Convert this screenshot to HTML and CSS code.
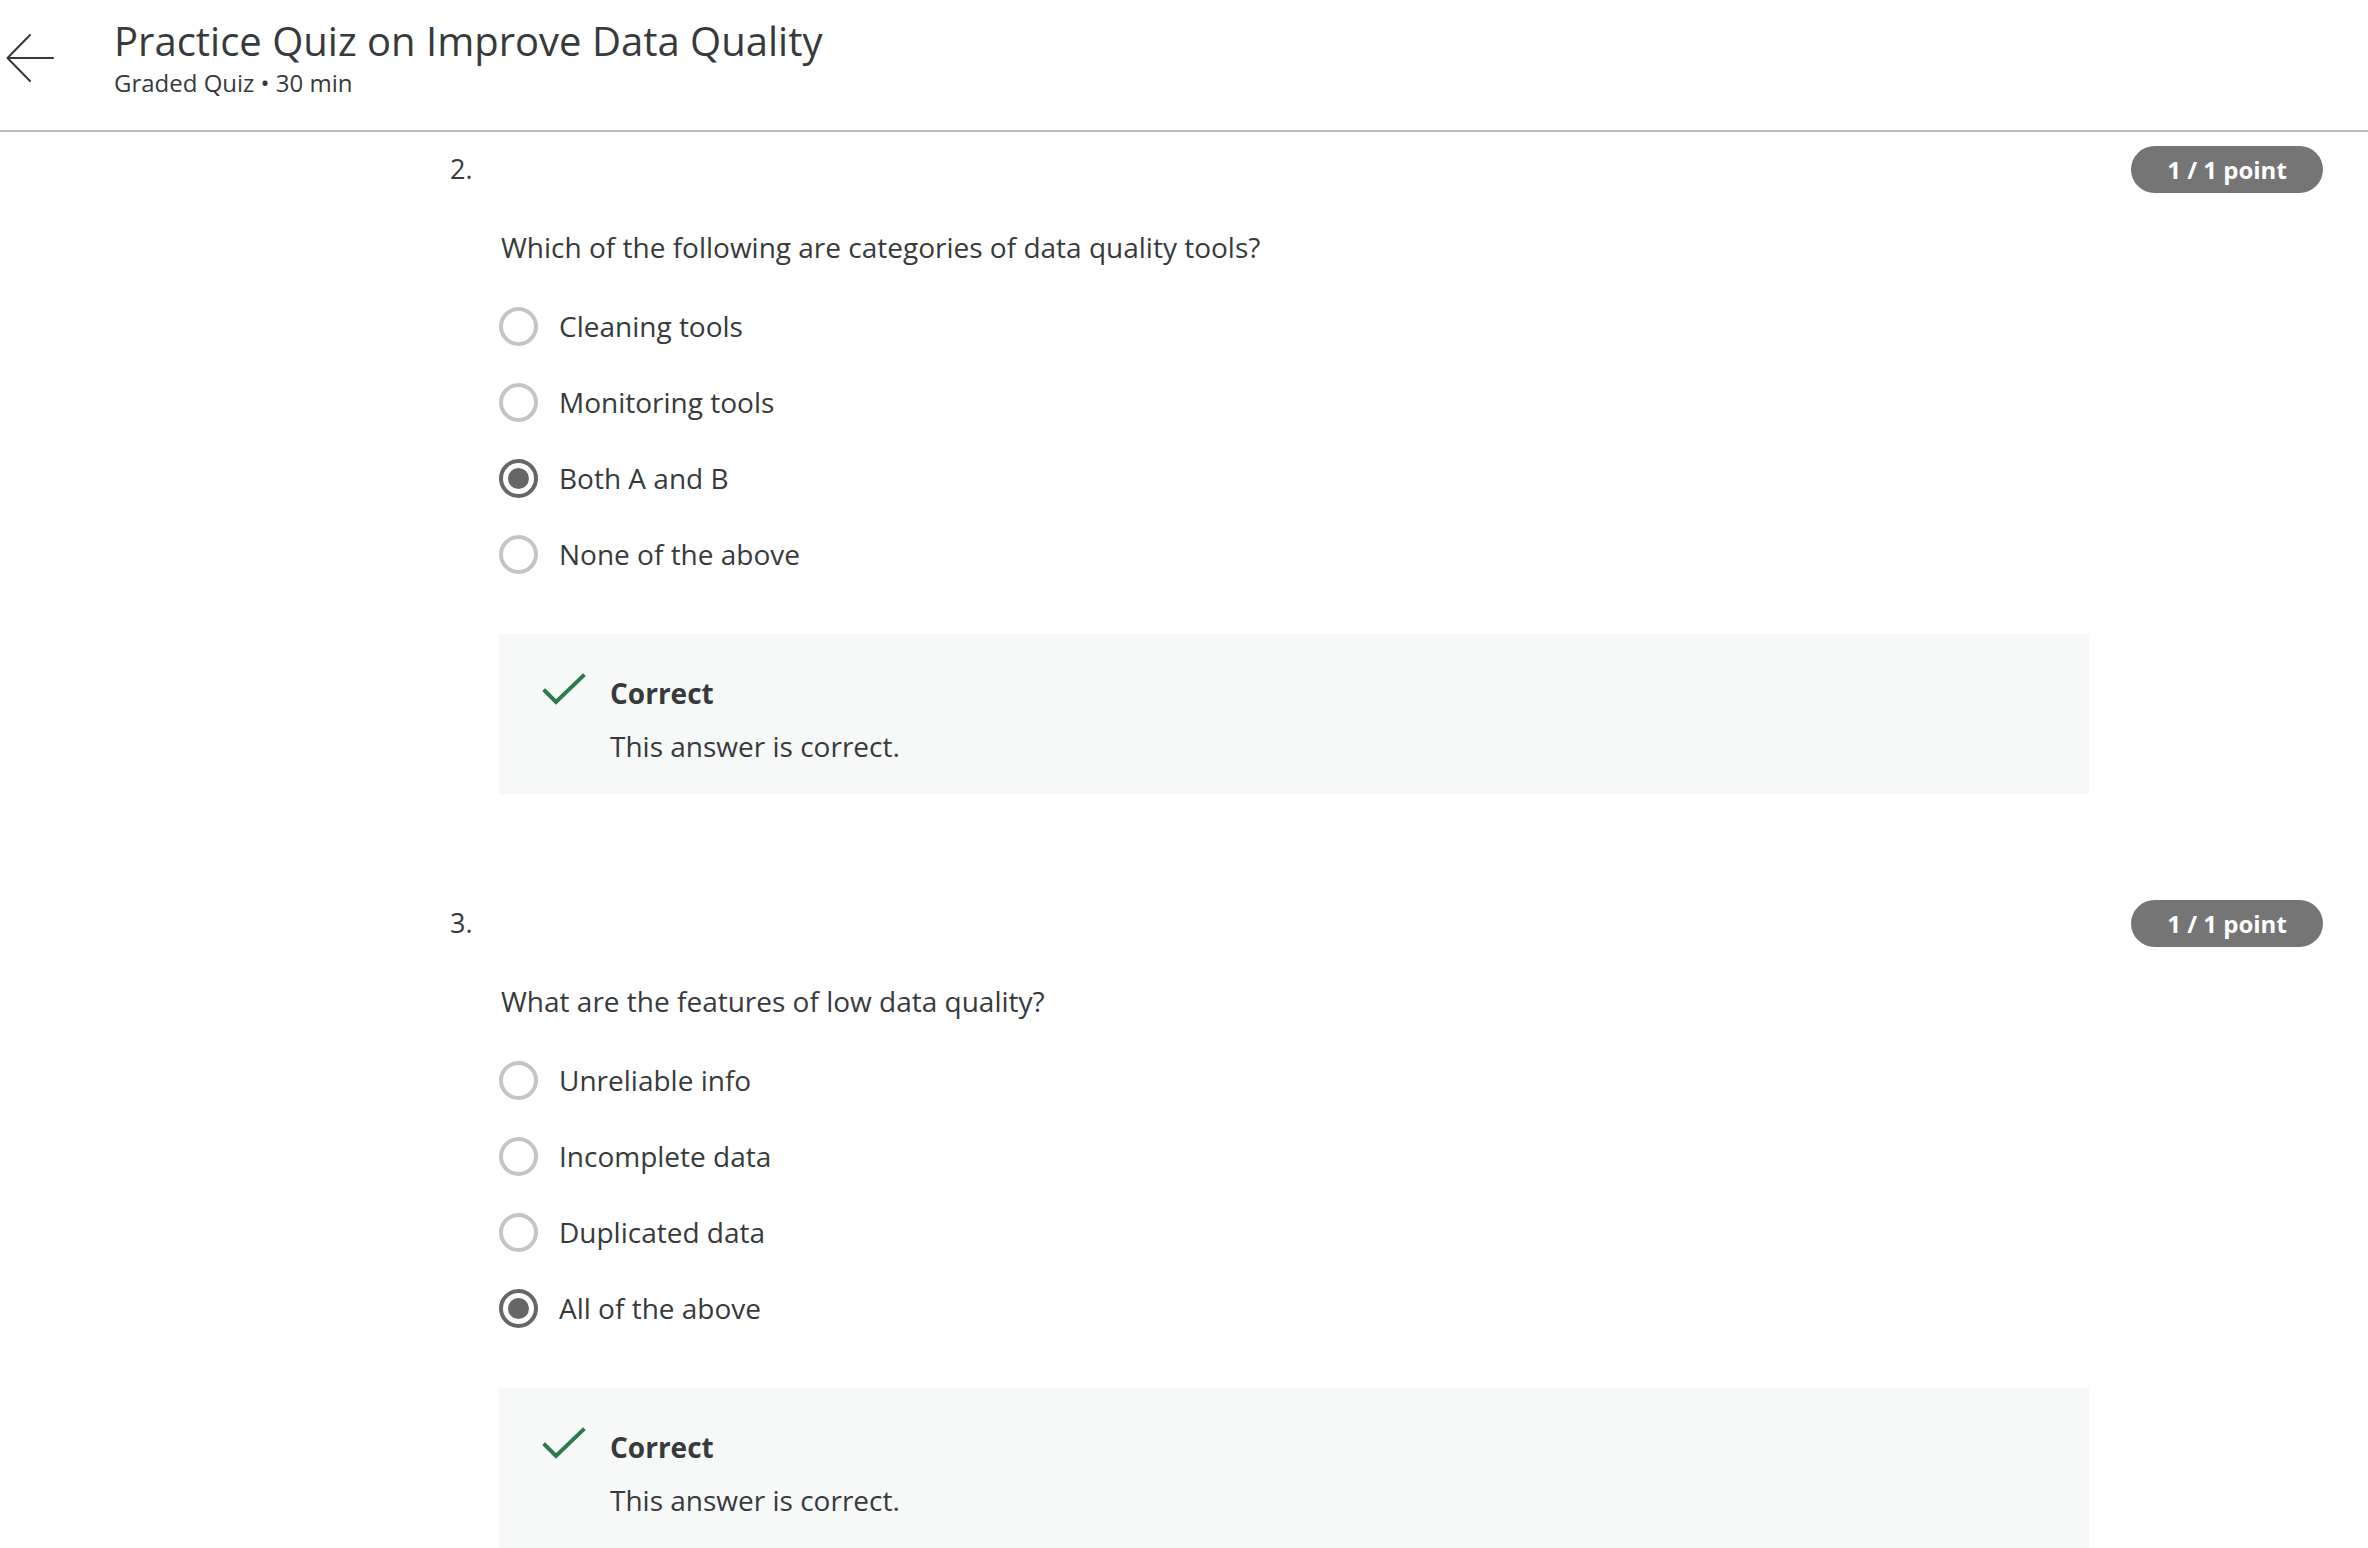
FILE: index.html
```html
<!DOCTYPE html>
<html lang="en">
<head>
<meta charset="utf-8">
<title>Practice Quiz on Improve Data Quality</title>
<link rel="stylesheet" href="styles.css">
</head>
<body>
<header class="topbar">
  <button class="back" aria-label="Back">
    <svg width="48" height="48" viewBox="0 0 48 48" fill="none" stroke="#373a3c" stroke-width="2" stroke-linecap="round" stroke-linejoin="round">
      <path d="M47 24H2"/>
      <path d="M24 1L1.5 24L24 47"/>
    </svg>
  </button>
  <div class="titles">
    <h1 class="title">Practice Quiz on Improve Data Quality</h1>
    <div class="subtitle">Graded Quiz • 30 min</div>
  </div>
</header>

<main class="content">
  <section class="question">
    <div class="q-head">
      <span class="q-num">2.</span>
      <span class="badge">1 / 1 point</span>
    </div>
    <div class="q-body">
      <p class="q-text">Which of the following are categories of data quality tools?</p>
      <ul class="options">
        <li class="option"><span class="radio"></span><span>Cleaning tools</span></li>
        <li class="option"><span class="radio"></span><span>Monitoring tools</span></li>
        <li class="option"><span class="radio checked"></span><span>Both A and B</span></li>
        <li class="option"><span class="radio"></span><span>None of the above</span></li>
      </ul>
      <div class="feedback">
        <svg class="check" width="44" height="34" viewBox="0 0 44 34" fill="none" stroke="#2e7a4f" stroke-width="4" stroke-linecap="square">
          <path d="M3 18L14 29L41 3"/>
        </svg>
        <div class="fb-text">
          <div class="fb-title">Correct</div>
          <div class="fb-desc">This answer is correct.</div>
        </div>
      </div>
    </div>
  </section>

  <section class="question">
    <div class="q-head">
      <span class="q-num">3.</span>
      <span class="badge">1 / 1 point</span>
    </div>
    <div class="q-body">
      <p class="q-text">What are the features of low data quality?</p>
      <ul class="options">
        <li class="option"><span class="radio"></span><span>Unreliable info</span></li>
        <li class="option"><span class="radio"></span><span>Incomplete data</span></li>
        <li class="option"><span class="radio"></span><span>Duplicated data</span></li>
        <li class="option"><span class="radio checked"></span><span>All of the above</span></li>
      </ul>
      <div class="feedback">
        <svg class="check" width="44" height="34" viewBox="0 0 44 34" fill="none" stroke="#2e7a4f" stroke-width="4" stroke-linecap="square">
          <path d="M3 18L14 29L41 3"/>
        </svg>
        <div class="fb-text">
          <div class="fb-title">Correct</div>
          <div class="fb-desc">This answer is correct.</div>
        </div>
      </div>
    </div>
  </section>
</main>
</body>
</html>
```

FILE: styles.css
```css
* { box-sizing: border-box; }

html, body {
  margin: 0;
  padding: 0;
  background: #ffffff;
  font-family: "Open Sans", "Noto Sans", Arial, sans-serif;
  color: #373a3c;
  overflow: hidden;
}

.topbar {
  height: 132px;
  border-bottom: 2px solid #bdbdbd;
  display: flex;
  align-items: flex-start;
}

.back {
  margin: 34px 0 0 6px;
  padding: 0;
  border: 0;
  background: transparent;
  width: 48px;
  height: 48px;
  display: block;
}

.back svg { display: block; }

.titles {
  margin-left: 60px;
  padding-top: 14px;
}

.title {
  margin: 0;
  font-size: 40px;
  font-weight: 400;
  line-height: 54px;
  color: #373a3c;
}

.subtitle {
  margin-top: -1px;
  font-size: 24px;
  line-height: 32px;
  color: #373a3c;
}

.content {
  padding: 0 45px 0 450px;
}

.question {
  padding-top: 14px;
  padding-bottom: 92px;
}

.q-head {
  display: flex;
  justify-content: space-between;
  align-items: center;
  height: 47px;
}

.q-num {
  font-size: 27px;
  line-height: 40px;
  margin-top: -2px;
}

.badge {
  display: inline-flex;
  align-items: center;
  justify-content: center;
  width: 192px;
  height: 47px;
  border-radius: 24px;
  background: #757575;
  color: #ffffff;
  font-weight: 700;
  font-size: 24px;
}

.q-body {
  padding-left: 49px;
  width: 1640px;
}

.q-text {
  margin: 34px 0 0 0;
  font-size: 28px;
  line-height: 40px;
  padding-left: 2px;
}

.options {
  list-style: none;
  margin: 21px 0 0 0;
  padding: 0;
}

.option {
  display: flex;
  align-items: center;
  height: 76px;
  font-size: 28px;
}

.radio {
  width: 39px;
  height: 39px;
  border-radius: 50%;
  border: 4px solid #c4c4c4;
  margin-right: 21px;
  flex: none;
  display: flex;
  align-items: center;
  justify-content: center;
}

.radio.checked {
  border: 4px solid #666666;
}

.radio.checked::after {
  content: "";
  width: 21px;
  height: 21px;
  border-radius: 50%;
  background: #666666;
}

.feedback {
  margin-top: 42px;
  width: 1590px;
  height: 160px;
  background: #f7f9f8;
  display: flex;
  align-items: flex-start;
  padding: 40px 0 0 43px;
}

.check {
  display: block;
  flex: none;
  margin-top: -1px;
}

.fb-text {
  margin-left: 24px;
}

.fb-title {
  font-weight: 700;
  font-size: 28px;
  line-height: 38px;
  margin-top: 0;
}

.fb-desc {
  margin-top: 15px;
  font-size: 28px;
  line-height: 38px;
}
```
